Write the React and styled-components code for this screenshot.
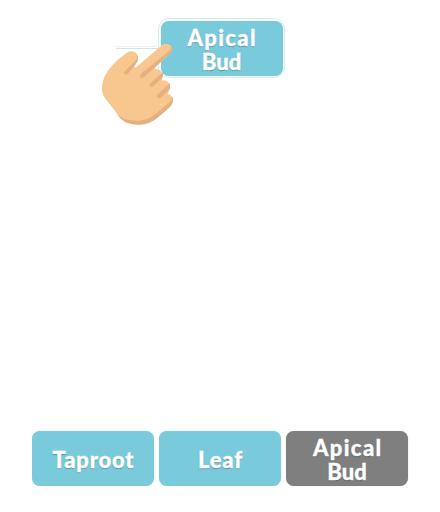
import React from "react";
import styled, { createGlobalStyle } from "styled-components";

const GlobalStyle = createGlobalStyle`
  * { box-sizing: border-box; }
  body { margin: 0; background: #fff; }
`;

const Board = styled.main`
  position: relative;
  width: 440px;
  height: 512px;
  padding: 18px 32px 26px;
  display: flex;
  flex-direction: column;
  justify-content: space-between;
  overflow: hidden;
  background: #fff;
`;

const TargetRow = styled.div`
  display: flex;
  align-items: flex-start;
  padding-left: 84px;
`;

const Connector = styled.div`
  width: 42px;
  height: 3px;
  margin-top: 28px;
  border: 1px solid #eef4f4;
  border-bottom-color: #cbe6e9;
  border-right: 0;
`;

const Slot = styled.div`
  padding: 2px 1.5px 0;
  width: 127px;
  height: 60px;
  border: 1px solid #d9edf0;
  border-radius: 11px;
  background: #fff;
`;

const Options = styled.div`
  display: grid;
  grid-template-columns: repeat(3, 122.2px);
  column-gap: 4.8px;
`;

const Card = styled.button`
  display: flex;
  align-items: center;
  justify-content: center;
  width: 100%;
  height: 55px;
  padding: 0;
  border: 0;
  border-radius: 8px;
  background: ${({ $used }) => ($used ? "#7f7f7f" : "#79cbdc")};
  box-shadow: 0 0 1px ${({ $used }) => ($used ? "#aaa" : "#b9dce2")};
  color: #fff;
  font: 900 22px/24px Lato, "Open Sans", sans-serif;
  -webkit-text-stroke: 0.35px #fff;
  text-shadow: 0 1px 1px rgba(50, 70, 80, 0.5);
`;

const Label = styled.span`
  display: flex;
  flex-direction: column;
  align-items: center;
  padding-top: 2px;
`;

const Line = styled.span`
  letter-spacing: ${({ $spacing }) => $spacing}px;
  margin-right: ${({ $spacing }) => -$spacing}px;
`;

const Hand = styled.svg`
  position: absolute;
  left: 95px;
  top: 10px;
  width: 100px;
  height: 120px;
`;

function WordCard({ lines, used }) {
  return (
    <Card $used={used}>
      <Label>
        {lines.map(([text, spacing]) => (
          <Line key={text} $spacing={spacing}>{text}</Line>
        ))}
      </Label>
    </Card>
  );
}

const apicalBud = [["Apical", 1.4], ["Bud", 0]];

function PointingHand() {
  return (
    <Hand viewBox="0 0 300 360" aria-hidden="true">
      <path fill="#f7c78f" d="M90 133 C99 121 116 121 125 131 C131 140 131 149 126 157 L119 169 C119 173 123 173 127 169 L199 107 C208 99 222 100 229 109 C234 117 232 125 226 130 L181 172 L178 177 C190 175 204 185 203 198 L200 212 C214 206 227 220 225 234 L218 252 C228 253 236 264 232 273 C231 278 226 284 221 288 L185 318 C160 338 136 341 107 337 C88 333 74 323 65 309 L29 263 C19 248 18 226 28 202 C41 174 63 152 90 133 Z" />
      <path fill="#e5b080" d="M65 309 C74 321 88 329 107 331 C136 335 160 330 185 309 L221 278 C230 271 233 264 232 257 C236 270 235 279 226 290 L195 317 C177 333 157 344 134 344 C103 345 79 337 65 309 Z" />
      <path fill="#e5b080" d="M137 193 L221 124 C228 118 230 113 228 107 C234 115 233 124 226 130 L147 202 C138 208 130 200 137 193 Z M166 220 L196 193 C202 189 202 186 200 182 C205 188 206 199 200 205 L175 229 C167 235 160 226 166 220 Z M188 253 L218 226 C224 221 223 218 221 215 C227 224 226 235 222 240 L197 263 C188 268 182 260 188 253 Z M87 186 L120 154 C126 147 127 139 126 133 C131 144 129 154 122 162 L98 192 C92 197 84 193 87 186 Z" />
    </Hand>
  );
}

export default function App() {
  return (
    <>
      <GlobalStyle />
      <Board>
        <TargetRow>
          <Connector />
          <Slot><WordCard lines={apicalBud} /></Slot>
        </TargetRow>
        <Options>
          <WordCard lines={[["Taproot", 0.8]]} />
          <WordCard lines={[["Leaf", 0.8]]} />
          <WordCard lines={apicalBud} used />
        </Options>
        <PointingHand />
      </Board>
    </>
  );
}
